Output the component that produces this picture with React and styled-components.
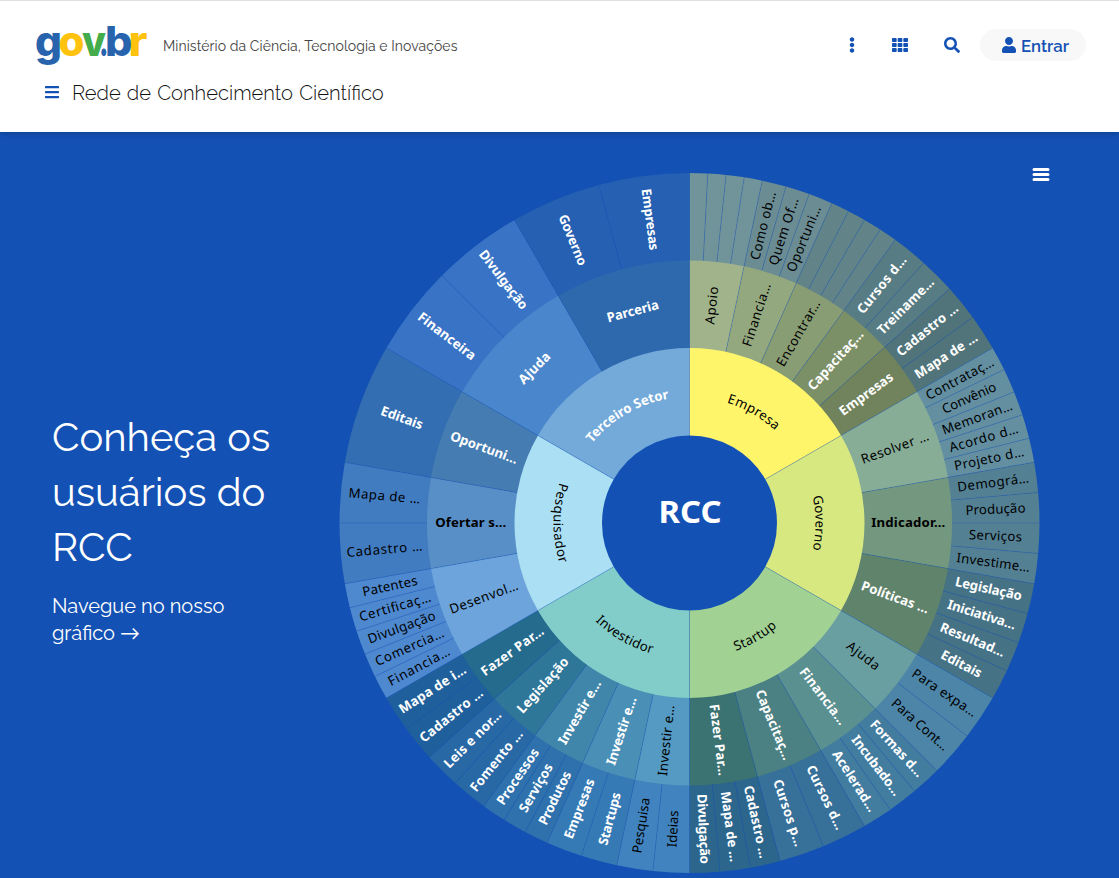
import React from "react";
import styled, { createGlobalStyle } from "styled-components";
import { FaEllipsisV, FaTh, FaSearch, FaUser, FaBars } from "react-icons/fa";

const GlobalStyle = createGlobalStyle`
  * { box-sizing: border-box; }
  html, body { margin: 0; padding: 0; }
  body {
    width: 1119px;
    height: 878px;
    overflow: hidden;
    background: #fff;
    font-family: Raleway, Lato, "Open Sans", sans-serif;
  }
`;

const BLUE = "#1351b4";

const Page = styled.div`
  width: 1119px;
  height: 878px;
  display: flex;
  flex-direction: column;
  overflow: hidden;
`;

const Header = styled.header`
  height: 132px;
  flex: none;
  position: relative;
  z-index: 1;
  background: #fff;
  border-top: 1px solid #e0e0e0;
  box-shadow: 0 1px 6px rgba(0, 0, 0, 0.22);
  padding: 20px 33px 0 36px;
`;

const TopRow = styled.div`
  display: flex;
  align-items: center;
  height: 48px;
`;

const Logo = styled.svg`
  display: block;
  width: 112px;
  height: 48px;
  flex: none;
  overflow: visible;
`;

const Ministry = styled.span`
  margin-left: 15px;
  padding-top: 2px;
  font-size: 14px;
  line-height: 20px;
  letter-spacing: 0.07px;
  color: #444;
  white-space: nowrap;
`;

const Actions = styled.div`
  margin-left: auto;
  display: flex;
  align-items: center;
  color: ${BLUE};
`;

const IconButton = styled.button`
  width: ${(p) => p.$width}px;
  height: 32px;
  padding: 0;
  border: 0;
  background: none;
  color: inherit;
  font-size: 16px;
  display: flex;
  align-items: center;
  justify-content: center;
`;

const SignIn = styled.button`
  width: 106px;
  height: 32px;
  margin-left: 1px;
  padding: 0 0 0 4px;
  border: 0;
  border-radius: 16px;
  background: #f8f8f8;
  color: ${BLUE};
  font: 600 16.8px Raleway, Lato, sans-serif;
  display: flex;
  align-items: center;
  justify-content: center;
  gap: 4px;

  span { padding-top: 2px; }
`;

const TitleRow = styled.div`
  display: flex;
  align-items: center;
  height: 30px;
  margin-top: 8px;
  padding-left: 8px;
  color: ${BLUE};
  font-size: 16px;
`;

const Title = styled.h1`
  margin: 0 0 0 12px;
  padding-top: 2px;
  font-size: 20.16px;
  font-weight: 300;
  font-variant-ligatures: common-ligatures;
  line-height: 28px;
  word-spacing: 1px;
  color: #111;
  white-space: nowrap;
`;

const Hero = styled.main`
  flex: 1;
  display: flex;
  background: ${BLUE};
  color: #fff;
`;

const Intro = styled.section`
  width: 339px;
  flex: none;
  padding: 277px 0 0 52px;
`;

const Heading = styled.h2`
  margin: 0;
  font-size: 40px;
  font-weight: 400;
  line-height: 55px;
`;

const Lead = styled.p`
  margin: 19px 0 0;
  font-size: 20px;
  line-height: 27px;
`;

const ChartArea = styled.section`
  position: relative;
  width: 780px;
  padding-top: 40px;
`;

const Chart = styled.svg`
  display: block;
  width: 702px;
  height: 702px;
  overflow: visible;
  font-family: "Lucida Grande", "Lucida Sans Unicode", "Noto Sans", "Open Sans", sans-serif;
`;

const Label = styled.text`
  font-size: 13.2px;
  font-weight: ${(p) => (p.$light || p.$strong ? 700 : 400)};
  fill: ${(p) => (p.$light ? "#fff" : "#000")};
`;

const CenterLabel = styled.text`
  font: 700 30px "Noto Sans", "DejaVu Sans", sans-serif;
  fill: #fff;
`;

const ChartMenu = styled.button`
  position: absolute;
  top: 31px;
  left: 690px;
  width: 24px;
  height: 24px;
  padding: 0;
  border: 0;
  background: none;
`;

/* Each leaf is [label, width, style]; styles: w = white bold, k = black, b = black bold */
const data = [
  { label: ["Empresa", 56], color: "#fff56b", groups: [
    { label: ["Apoio", 38, "k"], color: "#a0b38a", outer: "#71939a", items: [null, null, null, null] },
    { label: ["Financia…", 66, "k"], color: "#94a87f", outer: "#6a8c92",
      items: [["Como ob…", 70, "k"], ["Quem Of…", 70, "k"], ["Oportuni…", 70, "k"]] },
    { label: ["Encontrar…", 74, "k"], color: "#899d74", outer: "#628489", items: [null, null, null, null] },
    { label: ["Capacitaç…", 76, "w"], color: "#7c9067", outer: "#587c83",
      items: [["Cursos d…", 70, "w"], ["Treiname…", 74, "w"]] },
    { label: ["Empresas", 63, "w"], color: "#70835c", outer: "#507479",
      items: [["Cadastro …", 75, "w"], ["Mapa de …", 72, "w"]] },
  ] },
  { label: ["Governo", 54], color: "#d7e881", groups: [
    { label: ["Resolver …", 71, "k"], color: "#88ad97", outer: "#638fa1",
      items: [["Contrataç…", 75, "k"], ["Convênio", 58, "k"], ["Memoran…", 74, "k"], ["Acordo d…", 71, "k"], ["Projeto d…", 71, "k"]] },
    { label: ["Indicador…", 74, "b"], color: "#73987f", outer: "#548094",
      items: [["Demográ…", 72, "k"], ["Produção", 60, "k"], ["Serviços", 53, "k"], ["Investime…", 74, "k"]] },
    { label: ["Políticas …", 71, "w"], color: "#5f836b", outer: "#467286",
      items: [["Legislação", 68, "w"], ["Iniciativa…", 71, "w"], ["Resultad…", 69, "w"], ["Editais", 44, "w"]] },
  ] },
  { label: ["Startup", 48], color: "#a1d294", groups: [
    { label: ["Ajuda", 38, "k"], color: "#6a9fa2", outer: "#4c85a8",
      items: [["Para expa…", 75, "k"], ["Para Cont…", 71, "k"]] },
    { label: ["Financia…", 68, "w"], color: "#5a9090", outer: "#427c9f",
      items: [["Formas d…", 72, "w"], ["Incubado…", 72, "w"], ["Acelerad…", 70, "w"]] },
    { label: ["Capacitaç…", 75, "w"], color: "#4b8182", outer: "#377099",
      items: [["Cursos d…", 70, "w"], ["Cursos p…", 70, "w"]] },
    { label: ["Fazer Par…", 72, "w"], color: "#3b7272", outer: "#2c668d",
      items: [["Cadastro …", 74, "w"], ["Mapa de …", 71, "w"], ["Divulgação", 70, "w"]] },
  ] },
  { label: ["Investidor", 66], color: "#82cdc9", groups: [
    { label: ["Investir e…", 71, "k"], color: "#559ac2", outer: "#4083be",
      items: [["Ideias", 37, "k"], ["Pesquisa", 56, "k"]] },
    { label: ["Investir e…", 71, "w"], color: "#4a8fb6", outer: "#367ab5",
      items: [["Startups", 54, "w"], ["Empresas", 63, "w"]] },
    { label: ["Investir e…", 72, "w"], color: "#4086aa", outer: "#2e71ac",
      items: [["Produtos", 58, "w"], ["Serviços", 54, "w"], ["Processos", 65, "w"]] },
    { label: ["Legislação", 70, "w"], color: "#2f7799", outer: "#2768a5",
      items: [["Fomento …", 75, "w"], ["Leis e nor…", 75, "w"]] },
    { label: ["Fazer Par…", 74, "w"], color: "#246b8e", outer: "#1f5f9b",
      items: [["Cadastro …", 77, "w"], ["Mapa de i…", 77, "w"]] },
  ] },
  { label: ["Pesquisador", 82], color: "#aadff4", groups: [
    { label: ["Desenvol…", 72, "k"], color: "#6ca4db", outer: "#4e88cf",
      items: [["Financia…", 68, "k"], ["Comercia…", 74, "k"], ["Divulgação", 71, "k"], ["Certificaç…", 74, "k"], ["Patentes", 56, "k"]] },
    { label: ["Ofertar s…", 71, "b"], color: "#588fc6", outer: "#417bc0",
      items: [["Cadastro …", 76, "k"], ["Mapa de …", 72, "k"]] },
    { label: ["Oportuni…", 71, "w"], color: "#457cb2", outer: "#346eb2", items: [["Editais", 44, "w"]] },
  ] },
  { label: ["Terceiro Setor", 91], color: "#74aada", groups: [
    { label: ["Ajuda", 39, "w"], tangent: true, color: "#4a86cb", outer: "#3873c5",
      items: [["Financeira", 69, "w"], ["Divulgação", 71, "w"]] },
    { label: ["Parceria", 53, "w"], tangent: true, color: "#2e69ae", outer: "#2560b2",
      items: [["Governo", 54, "w"], ["Empresas", 62, "w"]] },
  ] },
];

const CX = 350.5;
const CY = 351;
const R = [87.5, 175, 262.5, 350];

const point = (r, deg) => {
  const a = (deg * Math.PI) / 180;
  return [CX + r * Math.sin(a), CY - r * Math.cos(a)];
};

const wedge = (r0, r1, a0, a1) =>
  `M${point(r1, a0)}A${r1} ${r1} 0 0 1 ${point(r1, a1)}L${point(r0, a1)}A${r0} ${r0} 0 0 0 ${point(r0, a0)}Z`;

/* Outer rings reach slightly under the ring inside them, so no gap shows between rings */
const Segment = ({ level, a0, a1, color }) => (
  <>
    <path d={wedge(R[level] - (level ? 1 : 0), R[level + 1], a0, a1)} fill={color} />
    <path
      d={`M${point(R[level], a0)}L${point(R[level + 1], a0)}`}
      stroke={BLUE}
      strokeWidth="0.5"
      strokeOpacity="0.6"
    />
  </>
);

const StraightLabel = ({ label, level, mid, tangent }) => {
  if (!label) return null;
  const [text, width, style] = label;
  const [x, y] = point((R[level] + R[level + 1]) / 2, mid);
  const rotation = tangent ? mid - 360 : mid < 180 ? mid - 90 : mid - 270;
  return (
    <Label
      $light={style === "w"}
      $strong={style === "b"}
      textAnchor="middle"
      textLength={width}
      dy="4"
      transform={`translate(${x} ${y}) rotate(${rotation})`}
    >
      {text}
    </Label>
  );
};

const ArcLabel = ({ id, label, mid, light }) => {
  const reversed = mid > 120 && mid < 300;
  const r = reversed ? 136 : 126;
  const from = point(r, reversed ? mid + 29 : mid - 29);
  const to = point(r, reversed ? mid - 29 : mid + 29);
  return (
    <>
      <path id={id} d={`M${from}A${r} ${r} 0 0 ${reversed ? 0 : 1} ${to}`} fill="none" />
      <Label $light={light} textAnchor="middle" textLength={label[1]}>
        <textPath href={`#${id}`} startOffset="50%" textLength={label[1]}>
          {label[0]}
        </textPath>
      </Label>
    </>
  );
};

const Sunburst = () => {
  const rings = [[], [], []];
  const labels = [];
  data.forEach((sector, i) => {
    const start = i * 60;
    rings[0].push(<Segment key={`s${i}`} level={0} a0={start} a1={start + 60} color={sector.color} />);
    labels.push(<ArcLabel key={`a${i}`} id={`arc${i}`} label={sector.label} mid={start + 30} light={i === 5} />);
    const span = 60 / sector.groups.length;
    sector.groups.forEach((group, j) => {
      const g0 = start + j * span;
      rings[1].push(<Segment key={`g${i}-${j}`} level={1} a0={g0} a1={g0 + span} color={group.color} />);
      labels.push(<StraightLabel key={`l${i}-${j}`} label={group.label} level={1} mid={g0 + span / 2} tangent={group.tangent} />);
      const step = span / group.items.length;
      group.items.forEach((item, k) => {
        const k0 = g0 + k * step;
        rings[2].push(<Segment key={`k${i}-${j}-${k}`} level={2} a0={k0} a1={k0 + step} color={group.outer} />);
        labels.push(<StraightLabel key={`t${i}-${j}-${k}`} label={item} level={2} mid={k0 + step / 2} />);
      });
    });
  });
  return (
    <Chart viewBox="0 0 702 702">
      {rings[2]}
      {rings[1]}
      {rings[0]}
      {labels}
      <CenterLabel x={CX + 0.5} y="351" textAnchor="middle" textLength="63" lengthAdjust="spacingAndGlyphs">RCC</CenterLabel>
    </Chart>
  );
};

const logoLetters = [
  ["g", -1, 27, "#2864ae"],
  ["o", 22.5, 26, "#ffc20e"],
  ["v", 46, 24, "#45ac4b"],
  [".", 63, 9.5, "#2864ae"],
  ["b", 69, 27.5, "#2864ae"],
  ["r", 92.5, 19, "#ffc20e"],
];

export default function App() {
  return (
    <>
      <GlobalStyle />
      <Page>
        <Header>
          <TopRow>
            <Logo viewBox="0 0 112 48" fontFamily='Inter, "Noto Sans", sans-serif' fontWeight="800" fontSize="41.5">
              {logoLetters.map(([char, x, width, fill]) => (
                <text key={char} x={x} y="35" fill={fill} textLength={width} lengthAdjust="spacingAndGlyphs">{char}</text>
              ))}
            </Logo>
            <Ministry>Ministério da Ciência, Tecnologia e Inovações</Ministry>
            <Actions>
              <IconButton $width={46}><FaEllipsisV /></IconButton>
              <IconButton $width={50}><FaTh size={16} /></IconButton>
              <IconButton $width={54}><FaSearch /></IconButton>
              <SignIn><FaUser size={16} /><span>Entrar</span></SignIn>
            </Actions>
          </TopRow>
          <TitleRow>
            <FaBars />
            <Title>Rede de Conhecimento Científico</Title>
          </TitleRow>
        </Header>
        <Hero>
          <Intro>
            <Heading>Conheça os<br />usuários do<br />RCC</Heading>
            <Lead>Navegue no nosso<br />gráfico →</Lead>
          </Intro>
          <ChartArea>
            <Sunburst />
            <ChartMenu aria-label="Menu">
              <svg width="24" height="24" stroke="#fff" strokeWidth="3" strokeLinecap="round">
                <path d="M5 6.5h14M5 11.5h14M5 16.5h14" />
              </svg>
            </ChartMenu>
          </ChartArea>
        </Hero>
      </Page>
    </>
  );
}
